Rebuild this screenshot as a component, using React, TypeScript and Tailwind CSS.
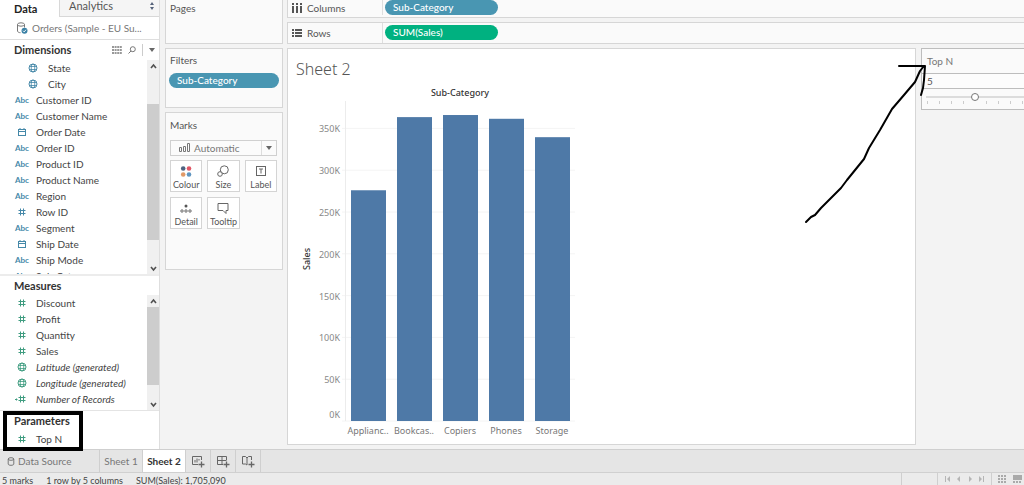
import React from "react";

type Kind = "abc" | "globe" | "date" | "num" | "calc";
type Field = { name: string; kind: Kind; indent?: boolean; italic?: boolean };

const dimensions: Field[] = [
  { name: "State", kind: "globe", indent: true },
  { name: "City", kind: "globe", indent: true },
  { name: "Customer ID", kind: "abc" },
  { name: "Customer Name", kind: "abc" },
  { name: "Order Date", kind: "date" },
  { name: "Order ID", kind: "abc" },
  { name: "Product ID", kind: "abc" },
  { name: "Product Name", kind: "abc" },
  { name: "Region", kind: "abc" },
  { name: "Row ID", kind: "num" },
  { name: "Segment", kind: "abc" },
  { name: "Ship Date", kind: "date" },
  { name: "Ship Mode", kind: "abc" },
  { name: "Sub-Category", kind: "abc" },
];

const measures: Field[] = [
  { name: "Discount", kind: "num" },
  { name: "Profit", kind: "num" },
  { name: "Quantity", kind: "num" },
  { name: "Sales", kind: "num" },
  { name: "Latitude (generated)", kind: "globe", italic: true },
  { name: "Longitude (generated)", kind: "globe", italic: true },
  { name: "Number of Records", kind: "calc", italic: true },
];

const bars = [
  { label: "Applianc..", value: 276000 },
  { label: "Bookcas..", value: 363500 },
  { label: "Copiers", value: 366000 },
  { label: "Phones", value: 361500 },
  { label: "Storage", value: 339500 },
];

function FieldIcon({ kind }: { kind: Kind }) {
  if (kind === "abc") return <span className="text-[8px] font-bold">Abc</span>;
  if (kind === "globe")
    return (
      <svg width="10" height="10" viewBox="0 0 10 10" fill="none" stroke="currentColor">
        <circle cx="5" cy="5" r="4" />
        <ellipse cx="5" cy="5" rx="1.8" ry="4" strokeWidth="0.8" />
        <path d="M1.3 3.5h7.4M1.3 6.5h7.4" strokeWidth="0.8" />
      </svg>
    );
  if (kind === "date")
    return (
      <svg width="10" height="10" viewBox="0 0 10 10" fill="none" stroke="currentColor">
        <rect x="1.5" y="2.5" width="7" height="6" />
        <path d="M1.5 4.5h7M3 1v1.5M7 1v1.5" />
      </svg>
    );
  return (
    <svg width="14" height="10" viewBox="0 0 14 10" fill="none" stroke="currentColor">
      <path d="M5.5 1.5v7M8.5 1.5v7M3.5 3.5h7M3.5 6.5h7" />
      {kind === "calc" && <path d="M0 5.5h2.5M1.5 4.5v2" />}
    </svg>
  );
}

function FieldRow({ field, color }: { field: Field; color: string }) {
  return (
    <li className={`flex h-4 shrink-0 items-center ${field.indent ? "pl-[25px]" : "pl-[14px]"}`}>
      <span className={`flex w-4 shrink-0 justify-center ${color}`}>
        <FieldIcon kind={field.kind} />
      </span>
      <span className={`whitespace-nowrap ${field.indent ? "ml-[7px]" : "ml-[6px]"} ${field.italic ? "italic" : ""}`}>
        {field.name}
      </span>
    </li>
  );
}

function Chevron({ up }: { up?: boolean }) {
  return (
    <svg width="13" height="12" viewBox="0 0 13 12" fill="none" stroke="#505050" strokeWidth="1.6" className="shrink-0">
      <path d={up ? "M4 8l2.5-3L9 8" : "M4 5l2.5 3L9 5"} />
    </svg>
  );
}

function ScrollTrack({ children }: { children: React.ReactNode }) {
  return <div className="flex w-3 shrink-0 flex-col items-stretch overflow-hidden bg-[#f0f0f0]">{children}</div>;
}

function Caret() {
  return (
    <svg width="6" height="4" viewBox="0 0 6 4" fill="#666">
      <path d="M0 0h6L3 4z" />
    </svg>
  );
}

function DataPane() {
  return (
    <aside className="flex w-40 shrink-0 flex-col border-r border-[#dedede] bg-white">
      <div className="flex h-[17px] shrink-0 text-[11px] leading-3" role="tablist">
        <button role="tab" aria-selected="true" className="w-[59px] pl-[14px] text-left font-bold text-[#222]">
          Data
        </button>
        <button
          role="tab"
          aria-selected="false"
          className="flex flex-1 items-center justify-between border-b border-l border-[#d8d8d8] bg-[#f5f5f5] pr-1 pb-1 pl-[9px] text-[#555]"
        >
          Analytics
          <svg width="6" height="8" viewBox="0 0 6 8" fill="#55627a">
            <path d="M3 0l2 3H1zM3 8l2-3H1z" />
          </svg>
        </button>
      </div>
      <div className="flex h-[23px] shrink-0 items-center gap-1 border-b border-[#dedede] pl-4 text-[#777]">
        <svg width="12" height="12" viewBox="0 0 12 12" fill="none" stroke="#777">
          <ellipse cx="5" cy="2.5" rx="3.5" ry="1.7" />
          <path d="M1.5 2.5v6.5c0 1 1.5 1.7 3 1.7M8.5 2.5v3" />
          <circle cx="8.5" cy="8.7" r="3" fill="#3c82a6" stroke="none" />
          <path d="M7 8.7l1.2 1.2 1.8-2.2" stroke="#fff" strokeWidth="0.9" />
        </svg>
        Orders (Sample - EU Su...
      </div>

      <div className="flex h-5 shrink-0 items-center pl-[14px]">
        <h2 className="flex-1 text-[11px] font-bold text-[#333]">Dimensions</h2>
        <button aria-label="View data" className="mr-[6px]">
          <svg width="10" height="8" viewBox="0 0 10 8" stroke="#777" strokeWidth="1.4" strokeDasharray="2 .6">
            <path d="M0 1h10M0 4h10M0 7h10" />
          </svg>
        </button>
        <button aria-label="Find field" className="mr-[6px]">
          <svg width="8" height="8" viewBox="0 0 8 8" fill="none" stroke="#777">
            <circle cx="4.8" cy="3.2" r="2.5" />
            <path d="M3 5L.5 7.5" />
          </svg>
        </button>
        <button aria-label="Pane menu" className="flex h-3 items-center border-l border-[#ccc] pr-1 pl-[6px]">
          <Caret />
        </button>
      </div>
      <div className="flex h-[214px] shrink-0 overflow-hidden">
        <ul className="flex flex-1 flex-col overflow-hidden">
          {dimensions.map((f) => (
            <FieldRow key={f.name} field={f} color="text-[#4588a8]" />
          ))}
        </ul>
        <ScrollTrack>
          <Chevron up />
          <div className="mt-8 h-[136px] bg-[#cdcdcd]" />
          <div className="flex-1" />
          <Chevron />
        </ScrollTrack>
      </div>

      <h2 className="h-[21px] shrink-0 border-t-2 border-[#ececec] pl-[14px] text-[11px] leading-[20px] font-bold text-[#333]">
        Measures
      </h2>
      <div className="flex h-[115px] shrink-0 overflow-hidden">
        <ul className="flex flex-1 flex-col overflow-hidden">
          {measures.map((f) => (
            <FieldRow key={f.name} field={f} color="text-[#3f9c80]" />
          ))}
        </ul>
        <ScrollTrack>
          <Chevron up />
          <div className="h-[78px] bg-[#cdcdcd]" />
          <div className="flex-1" />
          <Chevron />
        </ScrollTrack>
      </div>

      <section className="relative flex-1 border-t border-[#e4e4e4]">
        <h2 className="pt-[2px] pl-[14px] text-[11px] leading-4 font-bold text-[#333]">Parameters</h2>
        <ul className="pt-[2px]">
          <FieldRow field={{ name: "Top N", kind: "num" }} color="text-[#3f9c80]" />
        </ul>
        <div className="absolute top-0 left-[3px] z-10 h-10 w-20 border-4 border-black" />
      </section>
    </aside>
  );
}

function MarkButton({ label, children }: { label: string; children: React.ReactNode }) {
  return (
    <button className="flex h-8 flex-col items-center justify-between border border-[#d4d4d4] bg-white pt-1 text-[#555]">
      <svg width="14" height="13" viewBox="0 0 14 13" fill="none" stroke="#666">
        {children}
      </svg>
      <span className="text-[9px] leading-3">{label}</span>
    </button>
  );
}

function Cards() {
  return (
    <div className="flex w-[118px] shrink-0 flex-col gap-1 text-[#555]">
      <section className="h-11 shrink-0 border border-t-0 border-[#d6d6d6] bg-[#fafafa] pl-1">Pages</section>
      <section className="h-[60px] shrink-0 border border-[#d6d6d6] bg-[#fafafa] px-[3px] pt-[3px]">
        <h3 className="pl-px">Filters</h3>
        <button className="mt-[5px] block h-[15px] w-full rounded-full bg-[#4996b2] pl-2 text-left leading-[15px] font-medium text-white">
          Sub-Category
        </button>
      </section>
      <section className="h-[158px] shrink-0 border border-[#d6d6d6] bg-[#fafafa] px-1 pt-1">
        <h3>Marks</h3>
        <button className="mt-[7px] flex h-4 w-[107px] items-center border border-[#d0d0d0] bg-[#fbfbfb] text-[#777]">
          <svg width="12" height="10" viewBox="0 0 12 10" fill="none" stroke="#777" className="ml-[7px]">
            <path d="M1.5 4.5h2v4h-2zM5.5 3.5h2v5h-2zM9.5.5h2v8h-2z" />
          </svg>
          <span className="ml-1 flex-1 text-left leading-[14px]">Automatic</span>
          <span className="flex h-full items-center border-l border-[#ddd] px-1">
            <Caret />
          </span>
        </button>
        <div className="mt-1 grid w-[107px] grid-cols-3 gap-x-[5px] gap-y-[5px]">
          <MarkButton label="Colour">
            <g stroke="none">
              <circle cx="4.2" cy="3.5" r="2.3" fill="#4e6380" />
              <circle cx="10" cy="3.5" r="2.3" fill="#e15766" />
              <circle cx="4.2" cy="9.5" r="2.3" fill="#e19a68" />
              <circle cx="10" cy="9.5" r="2.3" fill="#5f95c0" />
            </g>
          </MarkButton>
          <MarkButton label="Size">
            <circle cx="8.3" cy="4.8" r="4" />
            <circle cx="4" cy="9" r="2.3" fill="white" />
          </MarkButton>
          <MarkButton label="Label">
            <rect x="2.5" y="1.5" width="9" height="9" />
            <path d="M5 4h4M7 4v4.5" />
          </MarkButton>
          <MarkButton label="Detail">
            <circle cx="7" cy="4" r="1.5" fill="#555" stroke="none" />
            <circle cx="3" cy="9" r="1.2" />
            <circle cx="7" cy="9" r="1.2" />
            <circle cx="11" cy="9" r="1.2" />
          </MarkButton>
          <MarkButton label="Tooltip">
            <path d="M2 1.5h10v7h-2v3l-3-3H2z" />
          </MarkButton>
        </div>
      </section>
    </div>
  );
}

type ShelfProps = { label: string; pill: string; pillClass: string; icon: string; className: string };

function Shelf({ label, pill, pillClass, icon, className }: ShelfProps) {
  return (
    <div className={`flex shrink-0 border border-r-0 border-[#d6d6d6] bg-[#fafafa] ${className}`}>
      <div className="flex w-[95px] items-center gap-[5px] border-r border-[#dedede] pl-1 text-[#555]">
        <svg width="10" height="10" viewBox="0 0 10 10" fill="#555">
          <path d={icon} />
        </svg>
        {label}
      </div>
      <button className={`ml-[2px] h-[15px] w-[113px] rounded-full pl-2 text-left leading-[15px] font-medium text-white ${pillClass}`}>
        {pill}
      </button>
    </div>
  );
}

const BASE = 336;
const scale = (v: number) => (v * 41.8) / 50000;

function Chart() {
  return (
    <svg width="290" height="356" viewBox="0 0 290 356" className="font-['Noto_Sans','Open_Sans',sans-serif]">
      <text x="172" y="11" textAnchor="middle" fontSize="9" fontWeight="500" fill="#333">
        Sub-Category
      </text>
      <text transform="translate(22 174) rotate(-90)" textAnchor="middle" fontSize="9" fontWeight="500" fill="#333">
        Sales
      </text>
      {[0, 1, 2, 3, 4, 5, 6, 7].map((i) => {
        const y = BASE - scale(i * 50000);
        return (
          <g key={i}>
            <path d={`M54 ${y}H287`} stroke="#f4f4f4" />
            <text x="52" y={i === 0 ? y - 3 : y + 4} textAnchor="end" fontSize="9" fill="#888">
              {i * 50}K
            </text>
          </g>
        );
      })}
      <path d="M57.5 16V336" stroke="#ececec" />
      {bars.map((b, i) => {
        const h = scale(b.value);
        return (
          <g key={b.label}>
            <rect x={63 + i * 46} y={BASE - h} width="35" height={h} fill="#4e79a7" />
            <text x={80 + i * 46} y="349" textAnchor="middle" fontSize="9" fill="#777">
              {b.label}
            </text>
          </g>
        );
      })}
    </svg>
  );
}

function ParameterControl() {
  return (
    <aside className="relative w-[103px] shrink-0">
      <div className="flex h-[62px] flex-col border border-r-0 border-[#bdbdbd] bg-[#fafafa]">
        <label htmlFor="topn" className="h-6 pl-[5px] leading-6 text-[#777]">
          Top N
        </label>
        <input
          id="topn"
          defaultValue="5"
          className="h-4 w-full border-y border-[#bdbdbd] bg-[#fcfcfc] pl-[5px] text-[#555] outline-none"
        />
        <div className="flex flex-col pt-1 pl-1">
          <input
            type="range"
            aria-label="Top N value"
            min="1"
            max="9"
            defaultValue="5"
            className="h-2 w-full appearance-none bg-transparent [&::-webkit-slider-runnable-track]:h-[2px] [&::-webkit-slider-runnable-track]:bg-[#dcdcdc] [&::-webkit-slider-thumb]:-mt-[3px] [&::-webkit-slider-thumb]:size-2 [&::-webkit-slider-thumb]:appearance-none [&::-webkit-slider-thumb]:rounded-full [&::-webkit-slider-thumb]:border [&::-webkit-slider-thumb]:border-[#777] [&::-webkit-slider-thumb]:bg-white"
          />
          <div className="flex justify-between px-px">
            {[1, 2, 3, 4, 5, 6, 7, 8, 9].map((n) => (
              <span key={n} className={`h-[3px] w-px ${n === 5 ? "bg-transparent" : "bg-[#ccc]"}`} />
            ))}
          </div>
        </div>
      </div>
      <svg
        width="124"
        height="164"
        viewBox="0 0 124 164"
        fill="none"
        stroke="#000"
        strokeWidth="2"
        strokeLinecap="round"
        strokeLinejoin="round"
        className="pointer-events-none absolute top-3 -left-[117px]"
      >
        <path d="M2 162L7 157L11 155L17 148L26 139L37 128L43 120L60 99L65 88L76 70L88 49L100 35L111 22L116 11L120 6M95 6H121M121 6L120 20L119 28L117 35" />
      </svg>
    </aside>
  );
}

function NewTabIcon({ d }: { d: string }) {
  return (
    <svg width="14" height="13" viewBox="0 0 14 13" fill="none" stroke="#666">
      <path d={d} />
      <path d="M10.5 6.5v6M7.5 9.5h6" strokeWidth="1.3" />
    </svg>
  );
}

function SheetTabs() {
  const icons = [
    { label: "New worksheet", d: "M7 9.5H1.5v-8h9V5M4 7.5V5M6 7.5V3.5M8 5.5V4" },
    { label: "New dashboard", d: "M7 9.5H1.5v-8h9V5M6 1.5v8M1.5 5.5h9" },
    { label: "New story", d: "M6 10L4.5 9h-3V1.5h3L6 3l1.500-1.500h3V5M6 3v7" },
  ];
  return (
    <nav className="flex h-[23px] shrink-0 border-t border-[#cfcfcf] bg-[#e5e5e5] text-[#777]">
      <button className="flex w-[100px] items-center gap-[3px] border-r border-[#cfcfcf] pl-[7px]">
        <svg width="8" height="9" viewBox="0 0 8 9" fill="none" stroke="#777">
          <ellipse cx="4" cy="2" rx="2.8" ry="1.3" />
          <path d="M1.2 2v5c0 .8 1.2 1.3 2.8 1.3s2.8-.5 2.8-1.3V2" />
        </svg>
        Data Source
      </button>
      <button className="w-[43px] border-r border-[#cfcfcf] whitespace-nowrap">Sheet 1</button>
      <button className="w-[43px] border-r border-[#cfcfcf] bg-white font-bold whitespace-nowrap text-[#333]">Sheet 2</button>
      {icons.map((i) => (
        <button key={i.label} aria-label={i.label} className="flex w-[25px] items-center justify-center border-r border-[#cfcfcf]">
          <NewTabIcon d={i.d} />
        </button>
      ))}
    </nav>
  );
}

function StatusBar() {
  const nav = [
    { label: "First", d: "M1 1h1v6H1zM6 1v6L3 4z" },
    { label: "Previous", d: "M5 1v6L2 4z" },
    { label: "Next", d: "M2 1v6l3-3z" },
    { label: "Last", d: "M1 1v6l3-3zM5 1h1v6H5z" },
  ];
  return (
    <footer className="flex h-[13px] shrink-0 overflow-hidden border-t border-[#d0d0d0] bg-[#ebebeb] text-[9px] leading-4 text-[#444]">
      <span className="pl-[2px]">5 marks</span>
      <span className="pl-[13px]">1 row by 5 columns</span>
      <span className="pl-[13px]">SUM(Sales): 1,705,090</span>
      <div className="ml-auto flex">
        <div className="w-9 border-l border-[#cfcfcf]" />
        <div className="flex w-[55px] items-center justify-around border-x border-[#cfcfcf] px-1">
          {nav.map((n) => (
            <button key={n.label} aria-label={n.label}>
              <svg width="7" height="8" viewBox="0 0 7 8" fill="#b5b5b5">
                <path d={n.d} />
              </svg>
            </button>
          ))}
        </div>
        <div className="flex w-8 items-center justify-between pr-[2px] pl-[6px]">
          <button aria-label="Show tabs">
            <svg width="9" height="8" viewBox="0 0 9 8" fill="#aaa">
              <path d="M0 0h2v2H0zM3 0h2v2H3zM6 0h2v2H6zM0 3h2v2H0zM3 3h2v2H3zM6 3h2v2H6zM0 6h2v2H0zM3 6h2v2H3zM6 6h2v2H6z" />
            </svg>
          </button>
          <button aria-label="Show filmstrip">
            <svg width="9" height="8" viewBox="0 0 9 8" fill="#aaa">
              <path d="M0 0h9v5H0zM0 6h2v2H0zM3 6h2v2H3zM6 6h2v2H6z" />
            </svg>
          </button>
        </div>
      </div>
    </footer>
  );
}

export default function App() {
  return (
    <div className="flex h-screen flex-col overflow-hidden bg-[#f3f3f3] font-['Lato','Open_Sans',sans-serif] text-[10px] leading-4 text-[#444]">
      <div className="flex min-h-0 flex-1">
        <DataPane />
        <div className="flex min-w-0 flex-1 gap-1 pl-[5px]">
          <Cards />
          <main className="flex min-w-0 flex-1 flex-col">
            <Shelf
              label="Columns"
              pill="Sub-Category"
              pillClass="bg-[#4996b2]"
              icon="M0 0h2v2H0zM4 0h2v2H4zM8 0h2v2H8zM0 3h2v7H0zM4 3h2v7H4zM8 3h2v7H8z"
              className="h-[18px] border-t-0 pb-[2px]"
            />
            <Shelf
              label="Rows"
              pill="SUM(Sales)"
              pillClass="bg-[#00b180] mt-[2px]"
              icon="M0 1h2v2H0zM0 4h2v2H0zM0 7h2v2H0zM3 1h7v2H3zM3 4h7v2H3zM3 7h7v2H3z"
              className="mt-1 h-[22px]"
            />
            <div className="mt-1 flex min-h-0 flex-1 gap-[5px]">
              <section className="mb-1 min-w-0 flex-1 border border-[#d6d6d6] bg-white">
                <h1 className="pt-2 pl-2 font-['Noto_Sans','Open_Sans',sans-serif] text-base leading-6 font-light text-[#555]">
                  Sheet 2
                </h1>
                <div className="pt-1">
                  <Chart />
                </div>
              </section>
              <ParameterControl />
            </div>
          </main>
        </div>
      </div>
      <SheetTabs />
      <StatusBar />
    </div>
  );
}
